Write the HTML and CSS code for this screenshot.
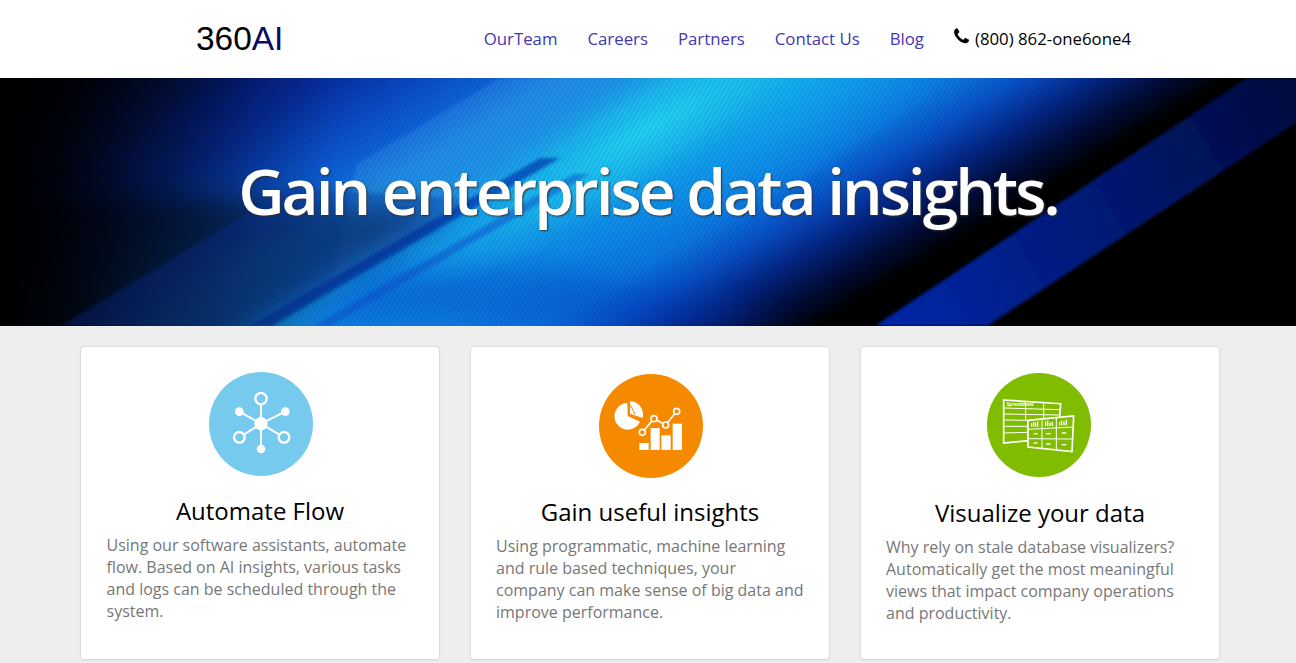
FILE: index.html
```html
<!doctype html>
<html lang="en">

<head>
    <meta charset="utf-8">
    <meta name="viewport" content="width=device-width, initial-scale=1.0">
    <title>360AI</title>
    <link rel="stylesheet" href="styles.css">
</head>

<body>

    <header class="topbar">
        <a class="logo" href="#">360<span>AI</span></a>
        <nav class="menu">
            <a href="#">OurTeam</a>
            <a href="#">Careers</a>
            <a href="#">Partners</a>
            <a href="#">Contact Us</a>
            <a href="#">Blog</a>
            <span class="phone">
                <svg class="phone_icon" viewBox="0 0 1792 1792"><path d="M1600 1240q0 27-10 70.5t-21 68.5q-21 50-122 106-94 51-186 51-27 0-53-3.5t-57.5-12.5-47-14.5-55.5-20.5-49-18q-98-35-175-83-127-79-264-216t-216-264q-48-77-83-175-3-9-18-49t-20.5-55.5-14.5-47-12.5-57.5-3.5-53q0-92 51-186 56-101 106-122 25-11 68.5-21t70.5-10q14 0 21 3 18 6 53 76 11 19 30 54t35 63.5 31 53.5q3 4 17.5 25t21.5 35.5 7 28.5q0 20-28.5 50t-62 55-62 53-28.5 46q0 9 5 22.5t8.5 20.5 14 24 11.5 19q76 137 174 235t235 174q2 1 19 11.5t24 14 20.5 8.5 22.5 5q18 0 46-28.5t53-62 55-62 50-28.5q14 0 28.5 7t35.5 21.5 25 17.5q25 15 53.5 31t63.5 35 54 30q70 35 76 53 3 7 3 21z"/></svg>
                (800) 862-one6one4
            </span>
        </nav>
    </header>

    <section class="hero">
        <svg class="hero_art" viewBox="0 0 1296 248" preserveAspectRatio="none">
            <defs>
                <linearGradient id="sweep" gradientUnits="userSpaceOnUse" x1="421" y1="-253" x2="874" y2="501">
                    <stop offset="0" stop-color="#000"/>
                    <stop offset="0.07" stop-color="#000e40"/>
                    <stop offset="0.15" stop-color="#03228a"/>
                    <stop offset="0.2" stop-color="#0632a8"/>
                    <stop offset="0.25" stop-color="#0a4cc8"/>
                    <stop offset="0.29" stop-color="#0e62da"/>
                    <stop offset="0.33" stop-color="#1484e6"/>
                    <stop offset="0.42" stop-color="#1090ea"/>
                    <stop offset="0.5" stop-color="#0e8cec"/>
                    <stop offset="0.56" stop-color="#0b78e4"/>
                    <stop offset="0.6" stop-color="#0850c8"/>
                    <stop offset="0.64" stop-color="#03288a"/>
                    <stop offset="0.68" stop-color="#010e40"/>
                    <stop offset="0.72" stop-color="#000"/>
                    <stop offset="1" stop-color="#000"/>
                </linearGradient>
                <linearGradient id="leftfade" x1="0" x2="1" y1="0" y2="0">
                    <stop offset="0" stop-color="#000"/>
                    <stop offset="0.05" stop-color="#000" stop-opacity="0.85"/>
                    <stop offset="0.12" stop-color="#000" stop-opacity="0.5"/>
                    <stop offset="0.2" stop-color="#000" stop-opacity="0.15"/>
                    <stop offset="0.26" stop-color="#000" stop-opacity="0"/>
                </linearGradient>
                <linearGradient id="bandfade" gradientUnits="userSpaceOnUse" x1="900" y1="248" x2="1296" y2="10">
                    <stop offset="0" stop-color="#0628ac"/>
                    <stop offset="0.5" stop-color="#031a78"/>
                    <stop offset="1" stop-color="#020a40"/>
                </linearGradient>
                <radialGradient id="glow" gradientUnits="userSpaceOnUse" cx="0" cy="0" r="1" gradientTransform="translate(650 50) rotate(-31) scale(300 62)">
                    <stop offset="0" stop-color="#22d4f6"/>
                    <stop offset="0.5" stop-color="#1cc0f2" stop-opacity="0.75"/>
                    <stop offset="1" stop-color="#14a8ee" stop-opacity="0"/>
                </radialGradient>
                <radialGradient id="glow2" gradientUnits="userSpaceOnUse" cx="0" cy="0" r="1" gradientTransform="translate(790 10) rotate(-31) scale(260 90)">
                    <stop offset="0" stop-color="#12b0f4" stop-opacity="0.9"/>
                    <stop offset="1" stop-color="#12a8f0" stop-opacity="0"/>
                </radialGradient>
                <pattern id="weave" width="4" height="4" patternUnits="userSpaceOnUse" patternTransform="rotate(30)">
                    <rect width="2" height="4" fill="#000" opacity="0.08"/>
                </pattern>
                <filter id="soft" x="-30%" y="-30%" width="160%" height="160%"><feGaussianBlur stdDeviation="14"/></filter>
                <filter id="soft1"><feGaussianBlur stdDeviation="1.5"/></filter>
            </defs>
            <rect width="1296" height="248" fill="url(#sweep)"/>
            <polygon points="300,248 800,248 560,190 380,190" fill="#0438c0" opacity="0.35" filter="url(#soft)"/>
            <polygon points="500,0 357,86 333,202 690,0" fill="#6fd0ff" opacity="0.14" filter="url(#soft1)"/>
            <rect width="1296" height="248" fill="url(#glow2)"/>
            <rect width="1296" height="248" fill="url(#glow)"/>
            <polygon points="250,248 272,248 560,80 540,80" fill="#0436b4" opacity="0.65" filter="url(#soft1)"/>
            <polygon points="314,248 330,248 590,96 574,96" fill="#0a48cc" opacity="0.45" filter="url(#soft1)"/>
            <polygon points="875,248 987,248 1296,45 1296,0 1247,0" fill="url(#bandfade)" filter="url(#soft1)"/>
            <rect width="1296" height="248" fill="url(#leftfade)"/>
            <polygon points="-20,270 220,270 450,130 200,120 -20,120" fill="#000" opacity="0.5" filter="url(#soft)"/>
            <polygon points="60,248 264,248 480,122 290,110" fill="#0830b0" opacity="0.3" filter="url(#soft1)"/>
            <rect width="1296" height="248" fill="url(#weave)"/>
        </svg>
        <h1>Gain enterprise data insights.</h1>
    </section>

    <main class="cards">
        <article class="card card_a">
            <svg class="pic" viewBox="27 23 312 312">
                <circle cx="183" cy="179" r="156" fill="#76caee"/>
                <g stroke="#fff" stroke-width="6" fill="none">
                    <path d="M183 178V122M183 178V254M183 178L118 142M183 178L256 142M183 178L132 211M183 178L238 211"/>
                    <circle cx="183" cy="103" r="17" stroke-width="7" fill="#76caee"/>
                    <circle cx="118" cy="219" r="16" stroke-width="7" fill="#76caee"/>
                    <circle cx="252" cy="219" r="16" stroke-width="7" fill="#76caee"/>
                </g>
                <g fill="#fff">
                    <circle cx="183" cy="178" r="20"/>
                    <circle cx="118" cy="142" r="13"/>
                    <circle cx="256" cy="142" r="13"/>
                    <circle cx="183" cy="254" r="13"/>
                </g>
            </svg>
            <h2>Automate Flow</h2>
            <p>Using our software assistants, automate flow. Based on AI insights, various tasks and logs can be scheduled through the system.</p>
        </article>

        <article class="card card_b">
            <svg class="pic" viewBox="27 23 312 312">
                <circle cx="183" cy="179" r="156" fill="#f58a00"/>
                <g fill="#fff">
                    <path d="M112 110A40 40 0 1 0 150 166L113 149Z"/>
                    <path d="M120 142L120 104A41 41 0 0 1 158 155Z"/>
                    <rect x="148" y="230" width="28" height="21"/>
                    <rect x="182" y="185" width="27" height="66"/>
                    <rect x="214" y="207" width="28" height="44"/>
                    <rect x="248" y="172" width="28" height="79"/>
                </g>
                <path d="M120 114L136 145" stroke="#f58a00" stroke-width="3" fill="none"/>
                <path d="M157 198L192 157L227 176L260 135" stroke="#fff" stroke-width="5" fill="none"/>
                <g stroke="#fff" stroke-width="5" fill="#f58a00">
                    <circle cx="157" cy="198" r="9"/>
                    <circle cx="192" cy="157" r="9"/>
                    <circle cx="227" cy="176" r="9"/>
                    <circle cx="260" cy="135" r="9"/>
                </g>
            </svg>
            <h2>Gain useful insights</h2>
            <p>Using programmatic, machine learning and rule based techniques, your company can make sense of big data and improve performance.</p>
        </article>

        <article class="card card_c">
            <svg class="pic" viewBox="20 23 312 312">
                <circle cx="176" cy="179" r="156" fill="#80bc00"/>
                <path d="M70 104L241 115L237 170L143 170L143 226L70 233Z" fill="#80bc00" stroke="#fff" stroke-width="5"/>
                <path d="M72 128L238 133M72 146L238 149M72 164L143 165M72 183L143 183M72 203L143 201M136 112V165M190 115V165" stroke="#fff" stroke-width="3" fill="none"/>
                <text x="79" y="122" class="pic_label">Spreadsheet</text>
                <path d="M143 165L280 152L275 259L143 245Z" fill="#80bc00" stroke="#fff" stroke-width="5"/>
                <path d="M143 192L278 185M143 220L276 221M185 165V250M228 158V255" stroke="#fff" stroke-width="3" fill="none"/>
                <g fill="#fff">
                    <rect x="152" y="174" width="4" height="10"/><rect x="158" y="170" width="4" height="14"/><rect x="164" y="172" width="4" height="12"/><rect x="170" y="168" width="4" height="16"/>
                    <rect x="194" y="168" width="4" height="14"/><rect x="200" y="166" width="4" height="16"/><rect x="207" y="172" width="4" height="10"/><rect x="214" y="170" width="4" height="12"/>
                    <rect x="236" y="170" width="4" height="10"/><rect x="242" y="166" width="4" height="14"/><rect x="249" y="168" width="4" height="12"/><rect x="256" y="163" width="4" height="17"/>
                    <rect x="160" y="203" width="12" height="4"/><rect x="197" y="203" width="14" height="4"/><rect x="244" y="201" width="14" height="4"/>
                    <rect x="160" y="231" width="12" height="4"/><rect x="197" y="234" width="14" height="4"/><rect x="244" y="236" width="14" height="4"/>
                </g>
            </svg>
            <h2>Visualize your data</h2>
            <p>Why rely on stale database visualizers? Automatically get the most meaningful views that impact company operations and productivity.</p>
        </article>
    </main>

</body>

</html>
```

FILE: styles.css
```css
* {
    padding: 0;
    margin: 0;
    box-sizing: border-box;
}

body {
    background: #eee;
    font-family: "Open Sans", sans-serif;
    overflow: hidden;
}

a {
    text-decoration: none;
}

.topbar {
    height: 78px;
    background: #fff;
    display: flex;
    align-items: center;
    justify-content: space-between;
    padding: 0 165px 0 196px;
}

.logo {
    font-family: "Liberation Sans", Arial, sans-serif;
    font-size: 33.4px;
    color: #000;
}

.logo span {
    color: #0b0b5e;
}

.menu {
    display: flex;
    align-items: center;
    gap: 30px;
    font-size: 16.8px;
    margin-top: -2px;
}

.menu a {
    color: #3f38b4;
}

.phone {
    color: #000;
    display: flex;
    align-items: center;
    gap: 4px;
    margin-left: -2px;
}

.phone_icon {
    width: 19px;
    height: 19px;
    margin-top: -3px;
}

.hero {
    position: relative;
    height: 248px;
    background: #000;
    display: flex;
    align-items: center;
    justify-content: center;
    overflow: hidden;
}

.hero_art {
    position: absolute;
    top: 0;
    left: 0;
    width: 100%;
    height: 100%;
}

.hero h1 {
    position: relative;
    color: #fff;
    font-size: 64px;
    font-weight: 600;
    letter-spacing: -3px;
    text-shadow: 1px 1px 2px #333;
    margin-top: -24px;
}

.cards {
    display: grid;
    grid-template-columns: repeat(3, 360px);
    gap: 30px;
    padding: 20px 76px 3px 80px;
}

.card {
    height: 314px;
    background: #fff;
    border: 1px solid #ddd;
    border-radius: 4px;
    box-shadow: 0 1px 2px rgba(0, 0, 0, 0.06);
    padding: 25px 25px 0;
}

.pic {
    display: block;
    width: 104px;
    height: 104px;
    margin: 0 auto;
    transform: translateX(1px);
}

.card_b .pic {
    margin-top: 2px;
}

.card_c .pic {
    margin-top: 1px;
    transform: translateX(-1px);
}

.pic_label {
    font-family: "Open Sans", sans-serif;
    font-size: 13px;
    font-weight: 700;
    fill: #fff;
}

.card h2 {
    font-size: 24px;
    font-weight: 400;
    line-height: 33px;
    color: #000;
    text-align: center;
    margin-top: 18px;
}

.card_b h2 {
    margin-top: 17px;
}

.card_c h2 {
    margin-top: 19px;
}

.card p {
    font-size: 16px;
    line-height: 22px;
    color: #777;
    margin-top: 7px;
}

.card_a p {
    margin-left: 0.5px;
}
```
